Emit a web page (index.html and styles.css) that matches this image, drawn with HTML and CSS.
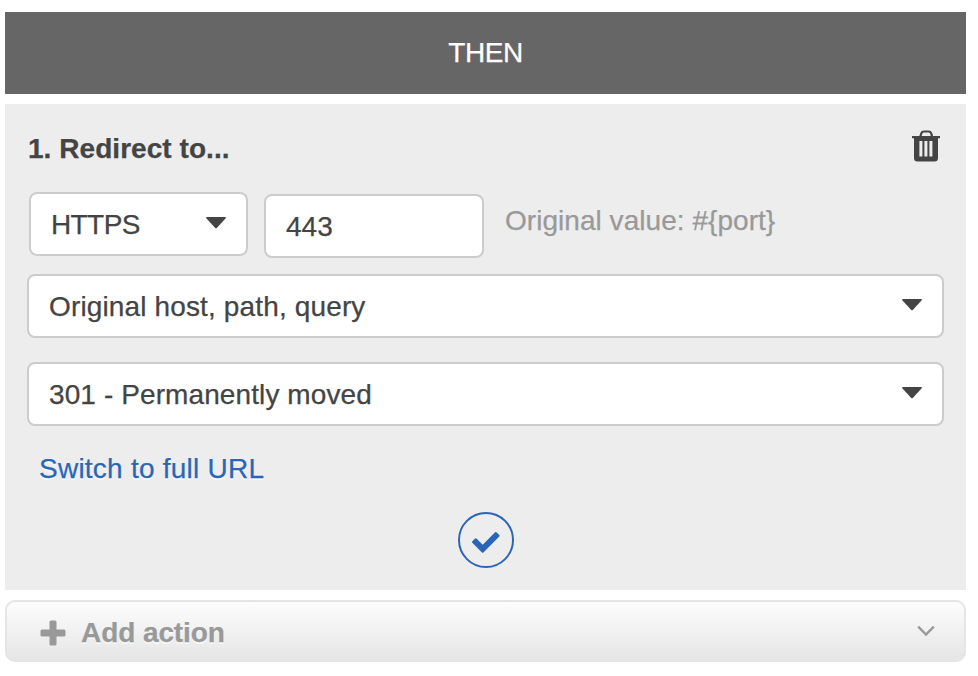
FILE: index.html
```html
<!DOCTYPE html>
<html lang="en">
<head>
<meta charset="utf-8">
<title>Rule actions</title>
<link rel="stylesheet" href="styles.css">
</head>
<body>
<main class="rule">
  <header class="band"><span class="band-text">THEN</span></header>
  <section class="panel">
    <div class="heading">
      <h2 class="title">1. Redirect to...</h2>
      <svg class="trash" width="28" height="32" viewBox="0 0 28 32">
        <path d="M8.200 7 9.400 3.200Q10 1.500 12 1.500h4.500q2 0 2.600 1.700L20.300 7" fill="none" stroke="#444" stroke-width="2.200"/>
        <path fill="#444" fill-rule="evenodd" d="M0 6h28v2.300h-2V28q0 3.500-3.500 3.500h-17Q2 31.500 2 28V8.300H0zM7.400 11v15.500h3V11zm5 0v15.500h3V11zm5 0v15.500h3V11z"/>
      </svg>
    </div>
    <div class="row">
      <div class="field protocol"><span class="t-https">HTTPS</span><svg class="caret" width="20" height="12" viewBox="0 0 20 12"><path d="M1 0h18q1.500 0 .5 1.500L11 10.800q-1 1-2 0L.5 1.500Q-.5 0 1 0z"/></svg></div>
      <div class="field port"><span class="t-port">443</span></div>
      <span class="hint">Original value: #{port}</span>
    </div>
    <div class="field wide"><span class="t-host">Original host, path, query</span><svg class="caret" width="20" height="12" viewBox="0 0 20 12"><path d="M1 0h18q1.500 0 .5 1.500L11 10.800q-1 1-2 0L.5 1.500Q-.5 0 1 0z"/></svg></div>
    <div class="field wide status"><span class="t-status">301 - Permanently moved</span><svg class="caret" width="20" height="12" viewBox="0 0 20 12"><path d="M1 0h18q1.500 0 .5 1.500L11 10.800q-1 1-2 0L.5 1.500Q-.5 0 1 0z"/></svg></div>
    <a class="link">Switch to full URL</a>
    <svg class="confirm" width="56" height="56" viewBox="0 0 56 56">
      <circle cx="28" cy="28" r="27" fill="none" stroke="#2a65b8" stroke-width="2"/>
      <path d="m15 30 2.800-2.800 6.900 6.900L37.800 21l2.800 2.800-15.900 16z" fill="#2a65b8" stroke="#2a65b8" stroke-width="2" stroke-linejoin="round"/>
    </svg>
  </section>
  <div class="add">
    <svg class="plus" width="26" height="26" viewBox="0 0 26 26"><path fill="#999" d="M11 .5h4q1.500 0 1.500 1.500v7.500H24q1.500 0 1.500 1.500v4q0 1.500-1.500 1.500h-7.500V24q0 1.500-1.500 1.500h-4q-1.500 0-1.500-1.500v-7.500H2Q.5 16.500.5 15v-4Q.5 9.500 2 9.500h7.500V2Q9.500.5 11 .5z"/></svg>
    <span class="add-text">Add action</span>
    <svg class="chevron" width="18" height="12" viewBox="0 0 18 12"><path d="m1.200 1.700 7.800 7.800 7.800-7.800" fill="none" stroke="#999" stroke-width="2.400"/></svg>
  </div>
</main>
</body>
</html>
```
FILE: styles.css
```css
* { box-sizing: border-box; }
body {
  margin: 0;
  background: #fff;
  color: #444;
  font: 28px/34px "Liberation Sans", Arial, sans-serif;
  white-space: nowrap;
  -webkit-text-stroke: 0.25px;
}
svg { flex: none; }
.rule {
  display: flex;
  flex-direction: column;
  gap: 10px;
  width: 966px;
  padding: 12px 0 0 5px;
}
.band {
  display: flex;
  justify-content: center;
  height: 82px;
  padding-top: 24px;
  background: #666;
  color: #fff;
  letter-spacing: -0.4px;
}
.panel {
  display: flex;
  flex-direction: column;
  height: 486px;
  padding: 26px 22px 0;
  background: #ededed;
}
.heading {
  display: flex;
  justify-content: space-between;
  height: 62px;
  padding: 0 4px 0 1px;
}
.title {
  margin: 2px 0 0;
  font-size: 28px;
  line-height: 34px;
  letter-spacing: 0.05px;
}
.row {
  display: flex;
  align-items: flex-start;
  height: 82px;
  padding-left: 2px;
}
.field {
  display: flex;
  justify-content: space-between;
  height: 64px;
  padding: 14px 20px 0;
  border: 2px solid #ccc;
  border-radius: 8px;
  background: #fff;
}
.caret {
  margin-top: 9px;
  fill: #444;
}
.protocol {
  width: 219px;
  letter-spacing: -0.6px;
}
.port {
  width: 220px;
  margin: 2px 21px 0 16px;
}
.hint {
  margin-top: 12px;
  color: #999;
  letter-spacing: 0.04px;
}
.t-host { letter-spacing: 0.14px; }
.t-status { letter-spacing: 0.1px; }
.status { margin-top: 24px; }
.link {
  align-self: flex-start;
  margin: 26px 0 0 12px;
  color: #2a65b8;
  letter-spacing: 0.24px;
  text-shadow: 0 2px 0 #f8f8f8;
}
.confirm {
  align-self: center;
  margin-top: 26px;
}
.add {
  display: flex;
  height: 62px;
  padding: 14px 29px 0 33px;
  border: 2px solid #e5e5e5;
  border-radius: 10px;
  background: linear-gradient(#fdfdfd, #e5e5e5);
}
.plus { margin: 4px 15px 0 0; }
.add-text {
  color: #999;
  font-weight: bold;
  letter-spacing: -0.08px;
  text-shadow: 0 2px 0 #f8f8f8;
}
.chevron { margin: 9px 0 0 auto; }
```
